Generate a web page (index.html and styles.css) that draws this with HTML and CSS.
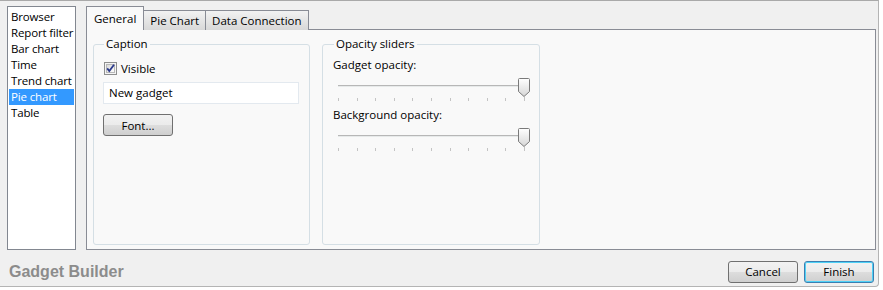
FILE: index.html
```html
<!DOCTYPE html>
<html lang="en">
<head>
    <meta charset="UTF-8">
    <title>Gadget Builder</title>
    <link rel="stylesheet" href="styles.css">
</head>
<body>
    <div class="window">
        <div class="main">
            <ul class="gadget-list">
                <li>Browser</li>
                <li>Report filter</li>
                <li>Bar chart</li>
                <li>Time</li>
                <li>Trend chart</li>
                <li class="selected">Pie chart</li>
                <li>Table</li>
            </ul>

            <div class="tabs">
                <div class="tab-strip">
                    <div class="tab active">General</div>
                    <div class="tab">Pie Chart</div>
                    <div class="tab">Data Connection</div>
                </div>
                <div class="tab-panel">
                    <fieldset class="group caption-group">
                        <legend>Caption</legend>
                        <label class="check">
                            <svg width="13" height="13" viewBox="0 0 13 13">
                                <defs>
                                    <linearGradient id="cb" x1="0" y1="0" x2="1" y2="1">
                                        <stop offset="0" stop-color="#d8d8d8"/>
                                        <stop offset="1" stop-color="#ffffff"/>
                                    </linearGradient>
                                </defs>
                                <rect x="0.5" y="0.5" width="12" height="12" fill="#f4f4f4" stroke="#8e8f8f"/>
                                <rect x="2.5" y="2.5" width="8" height="8" fill="url(#cb)" stroke="#b8b8b8"/>
                                <path d="M3.2 6.4 L5.3 9 L10 2.8" fill="none" stroke="#2b3a8c" stroke-width="1.8"/>
                            </svg>
                            <span>Visible</span>
                        </label>
                        <div class="textbox">New gadget</div>
                        <button class="btn font-btn">Font...</button>
                    </fieldset>

                    <fieldset class="group opacity-group">
                        <legend>Opacity sliders</legend>
                        <div class="slider-label">Gadget opacity:</div>
                        <div class="slider">
                            <div class="track"></div>
                            <svg class="thumb" width="12" height="19" viewBox="0 0 12 19">
                                <defs>
                                    <linearGradient id="th" x1="0" y1="0" x2="0" y2="1">
                                        <stop offset="0" stop-color="#ffffff"/>
                                        <stop offset="1" stop-color="#d6d6d6"/>
                                    </linearGradient>
                                </defs>
                                <path d="M1.5 0.5 H10.5 Q11.5 0.5 11.5 1.5 V13.5 L6 18.5 L0.5 13.5 V1.5 Q0.5 0.5 1.5 0.5 Z" fill="url(#th)" stroke="#7a7a7a"/>
                            </svg>
                            <div class="ticks">
                                <i></i><i></i><i></i><i></i><i></i><i></i><i></i><i></i><i></i><i></i><i class="last"></i>
                            </div>
                        </div>
                        <div class="slider-label">Background opacity:</div>
                        <div class="slider">
                            <div class="track"></div>
                            <svg class="thumb" width="12" height="19" viewBox="0 0 12 19">
                                <path d="M1.5 0.5 H10.5 Q11.5 0.5 11.5 1.5 V13.5 L6 18.5 L0.5 13.5 V1.5 Q0.5 0.5 1.5 0.5 Z" fill="url(#th)" stroke="#7a7a7a"/>
                            </svg>
                            <div class="ticks">
                                <i></i><i></i><i></i><i></i><i></i><i></i><i></i><i></i><i></i><i></i><i class="last"></i>
                            </div>
                        </div>
                    </fieldset>
                </div>
            </div>
        </div>

        <div class="footer">
            <span class="title">Gadget Builder</span>
            <div class="actions">
                <button class="btn">Cancel</button>
                <button class="btn default">Finish</button>
            </div>
        </div>
    </div>
</body>
</html>
```

FILE: styles.css
```css
body {
    margin: 0;
    background: #ffffff;
    font-family: "Open Sans", "Noto Sans", sans-serif;
    font-size: 11.5px;
    color: #000;
}
.window {
    width: 879px;
    height: 287px;
    box-sizing: border-box;
    background: #f0f0f0;
    border-top: 1px solid #a9a9a9;
    border-right: 1px solid #b4b4b4;
    border-bottom: 1px solid #b4b4b4;
    border-bottom-right-radius: 4px;
    display: flex;
    flex-direction: column;
}
.main {
    display: flex;
    padding: 5px 0 0 7px;
}
.gadget-list {
    list-style: none;
    margin: 0;
    padding: 2px 1px 0 1px;
    width: 69px;
    height: 244px;
    box-sizing: border-box;
    background: #fff;
    border: 1px solid #828790;
}
.gadget-list li {
    height: 16px;
    line-height: 16px;
    padding-left: 2px;
    letter-spacing: -0.15px;
    white-space: nowrap;
    overflow: hidden;
}
.gadget-list li.selected {
    background: #3399ff;
    color: #fff;
}
.tabs {
    margin-left: 10px;
    width: 790px;
}
.tab-strip {
    display: flex;
    align-items: flex-end;
    height: 23px;
    margin-top: 1px;
    position: relative;
    z-index: 1;
}
.tab {
    height: 19px;
    line-height: 19px;
    padding: 0 6px 0 6px;
    border: 1px solid #898c95;
    border-bottom: none;
    border-left: none;
    background: linear-gradient(#f2f2f2, #d8d8d8);
}
.tab.active {
    height: 23px;
    line-height: 23px;
    padding: 0 7px 0 7px;
    border-left: 1px solid #898c95;
    background: #f9f9f9;
}
.tab-panel {
    height: 221px;
    box-sizing: border-box;
    margin-top: -1px;
    border: 1px solid #898c95;
    background: #f9f9f9;
    display: flex;
    align-items: flex-start;
    gap: 12px;
    padding: 7px 0 0 6px;
}
.group {
    margin: 0;
    border: 1px solid #d5dfe5;
    border-radius: 3px;
    height: 208px;
    box-sizing: border-box;
}
.group legend {
    padding: 0 2px;
    margin-left: 1px;
    line-height: 14px;
}
.caption-group {
    width: 217px;
    padding: 0 10px 0 9px;
}
.opacity-group {
    width: 218px;
    padding: 0 8px 0 10px;
}
.check {
    display: flex;
    align-items: center;
    gap: 4px;
    margin-top: 8px;
    margin-left: 1px;
    height: 18px;
}
.check svg {
    display: block;
}
.textbox {
    margin-top: 5px;
    height: 22px;
    line-height: 20px;
    box-sizing: border-box;
    border: 1px solid #e3e9ef;
    background: #fff;
    padding-left: 5px;
    width: 196px;
}
.btn {
    font-family: inherit;
    font-size: 11.5px;
    height: 22px;
    width: 70px;
    padding: 0;
    border: 1px solid #707070;
    border-radius: 3px;
    background: linear-gradient(#f2f2f2 0%, #ebebeb 50%, #dddddd 51%, #cfcfcf 100%);
    color: #000;
}
.font-btn {
    margin-top: 10px;
}
.slider-label {
    height: 20px;
    line-height: 20px;
    margin-top: 4px;
}
.slider {
    position: relative;
    height: 26px;
    margin-left: 5px;
    width: 192px;
}
.track {
    position: absolute;
    left: 0;
    top: 10px;
    width: 187px;
    height: 2px;
    border-top: 1px solid #b7b7b7;
    background: #e7eaea;
    box-sizing: border-box;
}
.thumb {
    position: absolute;
    left: 180px;
    top: 3px;
}
.ticks {
    position: absolute;
    left: 0;
    top: 23px;
    width: 187px;
    display: flex;
    justify-content: space-between;
}
.ticks i {
    display: block;
    width: 1px;
    height: 3px;
    background: #c4c4c4;
}
.ticks i.last {
    height: 4px;
    margin-top: -1px;
}
.footer {
    flex: 1;
    display: flex;
    align-items: center;
    justify-content: space-between;
    padding: 0 4px 0 9px;
}
.title {
    font-family: "Liberation Sans", Arial, sans-serif;
    font-weight: bold;
    font-size: 16px;
    color: #8c8c8c;
    margin-top: 7px;
}
.actions {
    display: flex;
    gap: 6px;
    margin-top: 7px;
}
.btn.default {
    border-color: #3c7fb1;
    box-shadow: inset 0 0 0 1px #4fd2f7;
}
```
